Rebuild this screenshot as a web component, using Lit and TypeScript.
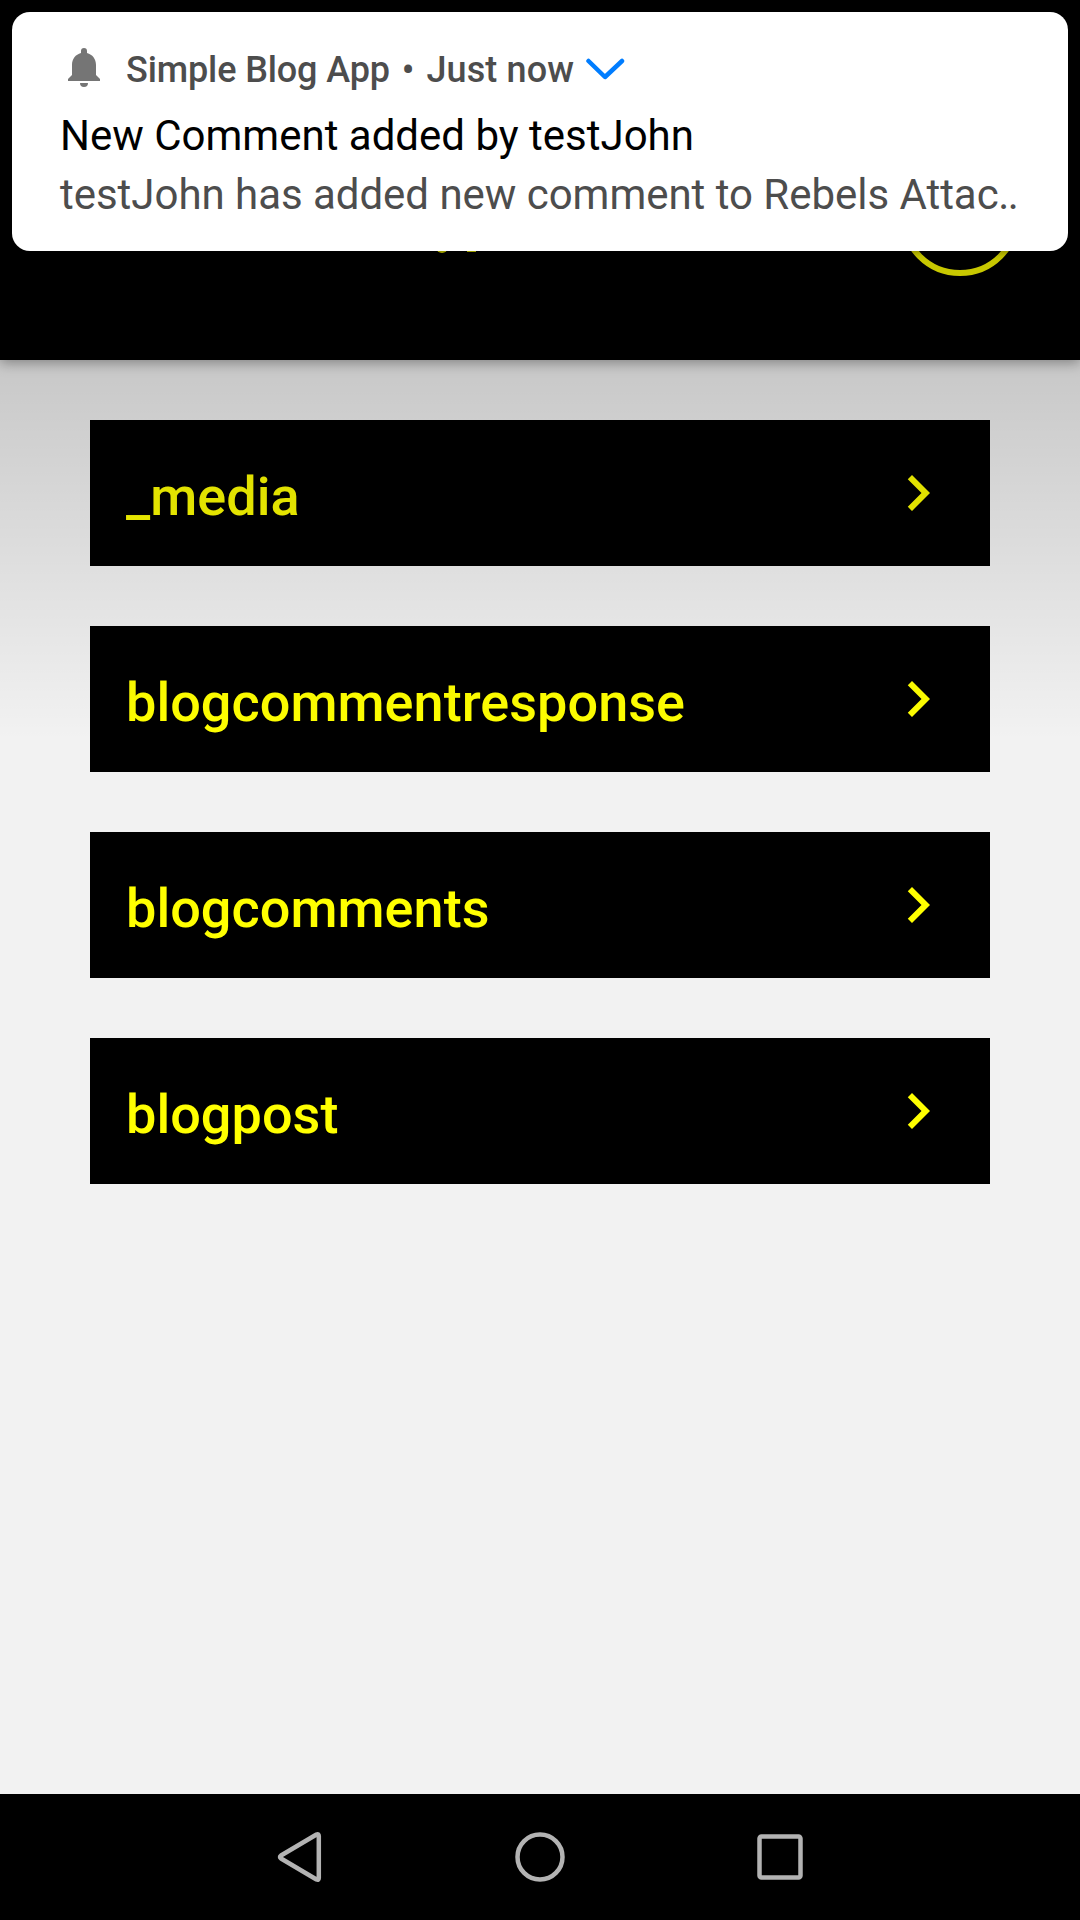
import { LitElement, html, css } from "lit";
import { customElement, property } from "lit/decorators.js";

@customElement("list-row")
class ListRow extends LitElement {
  @property() label = "";
  static styles = css`
    :host { display: flex; align-items: center; height: 146px; background: #000; color: #ff0; padding: 0 36px; box-sizing: border-box; }
    .label { flex: 1; font: 500 54px/64px Roboto, sans-serif; letter-spacing: 0.04px; padding-top: 8px; }
    svg { width: 72px; height: 72px; fill: currentColor; }
  `;
  render() {
    return html`<span class="label">${this.label}</span>
      <svg viewBox="0 0 24 24"><path d="M10 6L8.59 7.41 13.17 12l-4.58 4.59L10 18l6-6z" /></svg>`;
  }
}

@customElement("notification-card")
class NotificationCard extends LitElement {
  static styles = css`
    :host { display: flex; flex-direction: column; box-sizing: border-box; height: 239px; padding: 32px 48px 0;
      background: #fff; border-radius: 18px; box-shadow: 0 2px 6px rgba(0,0,0,.3); font-family: Roboto, sans-serif; white-space: nowrap; }
    .meta { display: flex; align-items: center; height: 50px; color: #4d4d4d; font-size: 36px; font-weight: 500; line-height: 50px; }
    .text { padding-top: 2px; letter-spacing: -0.12px; }
    .dot { margin: 0 3.500px 0 3px; }
    .now { letter-spacing: 0.1px; }
    .bell { width: 48px; height: 48px; margin-right: 18px; fill: #757575; }
    .chev { width: 40px; height: 24px; margin-left: 11px; fill: none; stroke: #007dff; stroke-width: 4.500; stroke-linecap: round; stroke-linejoin: round; }
    .title { font-size: 42px; line-height: 60px; color: #000; margin-top: 12px; }
    .body { font-size: 42px; line-height: 57px; color: #4d4d4d; letter-spacing: -0.03px; }
    .dots { letter-spacing: -1.500px; margin-left: -0.500px; }
  `;
  render() {
    return html`
      <div class="meta">
        <svg class="bell" viewBox="60 45 48 48"><path d="M81 53V51a3 3 0 0 1 6 0V53C92.500 54.500 96 59 96 65V75L100 79V81H68V79L72 75V65C72 59 75.500 54.500 81 53ZM80 83H88A4 4 0 0 1 80 83Z" /></svg>
        <span class="text">Simple Blog App <span class="dot">•</span> <span class="now">Just now</span></span>
        <svg class="chev" viewBox="585 57 40 24"><path d="M588.500 61L605 77L622 61" /></svg>
      </div>
      <div class="title">New Comment added by testJohn</div>
      <div class="body">testJohn has added new comment to Rebels Attac<span class="dots">..</span></div>`;
  }
}

@customElement("app-root")
class AppRoot extends LitElement {
  static styles = css`
    :host { display: flex; flex-direction: column; position: relative; width: 1080px; height: 1920px; overflow: hidden; background: #f2f2f2; }
    .header { position: relative; flex: none; height: 360px; background: #000; box-shadow: 0 3px 12px rgba(0,0,0,.34); }
    .ring { position: absolute; left: 900px; top: 156px; width: 120px; height: 120px; box-sizing: border-box; border: 6px solid #ff0; border-radius: 50%; }
    .tail { position: absolute; top: 246px; height: 7px; width: 12px; left: 436px; background: #ff0; border-radius: 0 0 6px 6px; }
    .stem { position: absolute; top: 246px; height: 6px; width: 9px; left: 467px; background: #ff0; }
    .list { flex: 1; display: flex; flex-direction: column; gap: 60px; padding: 60px 90px; }
    .scrim { position: absolute; inset: 0 0 auto 0; height: 740px; background: linear-gradient(rgba(0,0,0,.34), rgba(0,0,0,0)); }
    .card { position: absolute; left: 12px; right: 12px; top: 12px; }
    .nav { flex: none; height: 126px; background: #000; display: flex; justify-content: center; gap: 180px; align-items: center; }
    .nav svg { width: 60px; height: 60px; fill: none; stroke: #b3b3b3; stroke-width: 4.500; stroke-linejoin: round; }
  `;
  render() {
    return html`
      <div class="header"><div class="ring"></div><div class="tail"></div><div class="stem"></div></div>
      <div class="list">
        ${["_media", "blogcommentresponse", "blogcomments", "blogpost"].map((n) => html`<list-row .label=${n}></list-row>`)}
      </div>
      <div class="scrim"></div>
      <notification-card class="card"></notification-card>
      <div class="nav">
        <svg viewBox="270 1827 60 60"><path d="M281 1855.500L316.500 1834.500Q318.800 1833.500 318.800 1836V1878Q318.800 1880.500 316.500 1879.500L281 1858.500Q279 1857 281 1855.500Z" /></svg>
        <svg viewBox="510 1827 60 60"><circle cx="540" cy="1857" r="22.500" /></svg>
        <svg viewBox="750 1827 60 60"><rect x="759.500" y="1836.500" width="41" height="41" rx="2" /></svg>
      </div>`;
  }
}
